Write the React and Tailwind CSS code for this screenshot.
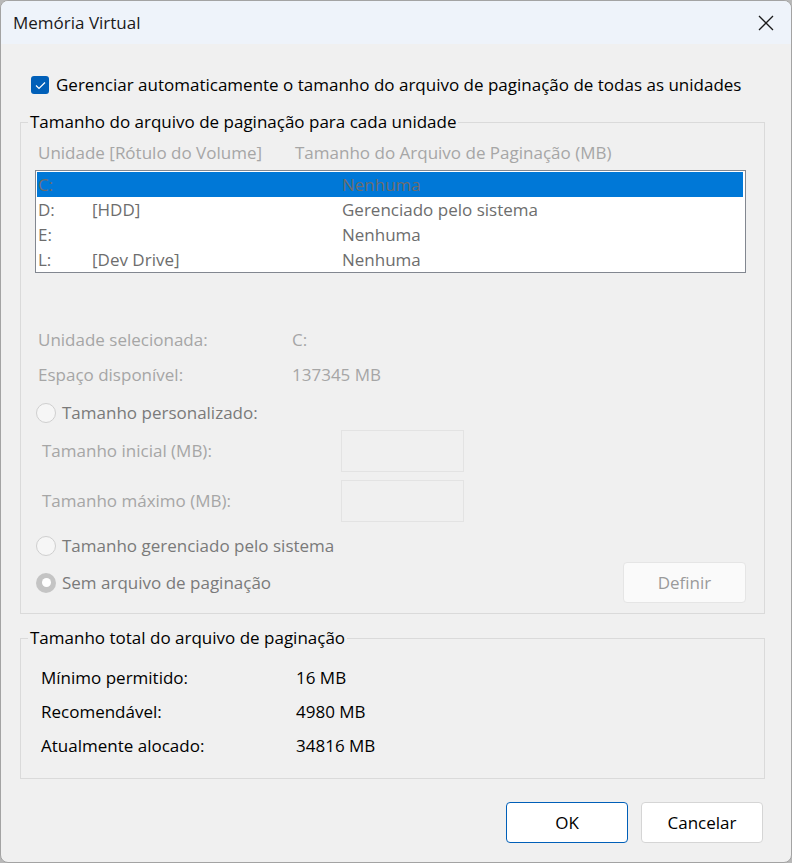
import React from 'react'

const font = { fontFamily: '"Open Sans", "Noto Sans", sans-serif' }

function Radio({ checked, label }) {
    return (
        <div className="flex items-center h-[24px]">
            {checked ? (
                <div className="w-[20px] h-[20px] rounded-full bg-[#c4c4c4] flex items-center justify-center">
                    <div className="w-[9px] h-[9px] rounded-full bg-white" />
                </div>
            ) : (
                <div className="w-[20px] h-[20px] rounded-full border border-[#cfcfcf] bg-[#f6f6f6]" />
            )}
            <span className="ml-[6px] text-[#7a7a7a]">{label}</span>
        </div>
    )
}

function Legend({ children }) {
    return (
        <legend className="ml-[7px] px-[2px] leading-[22px] text-black">{children}</legend>
    )
}

export default function App() {
    const drives = [
        { id: 'C:', label: '', size: 'Nenhuma', selected: true },
        { id: 'D:', label: '[HDD]', size: 'Gerenciado pelo sistema' },
        { id: 'E:', label: '', size: 'Nenhuma' },
        { id: 'L:', label: '[Dev Drive]', size: 'Nenhuma' },
    ]
    return (
        <div className="w-[792px] h-[863px] bg-[#b8b8b8]" style={font}>
            <div className="w-[792px] h-[863px] flex flex-col bg-[#f0f0f0] border border-[#a3a3a3] rounded-[8px] overflow-hidden text-[17px] text-black">
                {/* title bar */}
                <div className="h-[43px] shrink-0 bg-[#eef3fa] flex items-center justify-between pl-[12px] pr-[17px]">
                    <span className="text-[#1a1a1a]">Memória Virtual</span>
                    <svg width="16" height="16" viewBox="0 0 16 16" className="text-[#1a1a1a]">
                        <path d="M1 1 L15 15 M15 1 L1 15" stroke="currentColor" strokeWidth="1.3" fill="none" />
                    </svg>
                </div>

                <div className="flex flex-col pt-[29px]">
                    {/* auto checkbox */}
                    <div className="flex items-center h-[24px] pl-[30px]">
                        <div className="w-[18px] h-[18px] rounded-[3px] bg-[#005fb8] flex items-center justify-center">
                            <svg width="11" height="9" viewBox="0 0 11 9">
                                <path d="M1 4.5 L4 7.5 L10 1.5" stroke="white" strokeWidth="1.2" fill="none" />
                            </svg>
                        </div>
                        <span className="ml-[7px]">Gerenciar automaticamente o tamanho do arquivo de paginação de todas as unidades</span>
                    </div>

                    {/* per drive group */}
                    <fieldset className="mt-[14px] ml-[19px] w-[745px] border border-[#dadada] pb-[10px]">
                        <Legend>Tamanho do arquivo de paginação para cada unidade</Legend>
                        <div className="mt-[9px] h-[22px] flex items-center text-[#a6a6a6]">
                            <span className="pl-[17px] w-[274px]">Unidade [Rótulo do Volume]</span>
                            <span>Tamanho do Arquivo de Paginação (MB)</span>
                        </div>
                        <div className="mt-[6px] ml-[14px] w-[711px] border border-[#828790] bg-white pt-[1px] pl-[1px] pr-[2px]">
                            {drives.map((d) => (
                                <div key={d.id} className={`h-[25px] flex items-center text-[#6d6d6d] ${d.selected ? 'bg-[#0078d7]' : ''}`}>
                                    <span className="pl-[1px] w-[55px]">{d.id}</span>
                                    <span className="w-[250px]">{d.label}</span>
                                    <span>{d.size}</span>
                                </div>
                            ))}
                        </div>

                        <div className="mt-[55px] h-[24px] flex items-center text-[#a6a6a6]">
                            <span className="pl-[17px] w-[271px]">Unidade selecionada:</span>
                            <span>C:</span>
                        </div>
                        <div className="mt-[11px] h-[24px] flex items-center text-[#a6a6a6]">
                            <span className="pl-[17px] w-[271px]">Espaço disponível:</span>
                            <span>137345 MB</span>
                        </div>

                        <div className="mt-[14px] pl-[15px]">
                            <Radio label="Tamanho personalizado:" />
                        </div>
                        <div className="mt-[5px] flex items-center">
                            <span className="pl-[21px] w-[320px] text-[#a6a6a6]">Tamanho inicial (MB):</span>
                            <div className="w-[123px] h-[42px] border border-[#e3e3e3]" />
                        </div>
                        <div className="mt-[8px] flex items-center">
                            <span className="pl-[21px] w-[320px] text-[#a6a6a6]">Tamanho máximo (MB):</span>
                            <div className="w-[123px] h-[42px] border border-[#e3e3e3]" />
                        </div>
                        <div className="mt-[12px] pl-[15px]">
                            <Radio label="Tamanho gerenciado pelo sistema" />
                        </div>
                        <div className="mt-[4px] h-[41px] flex items-center justify-between pl-[15px] pr-[18px]">
                            <Radio checked label="Sem arquivo de paginação" />
                            <div className="w-[123px] h-[41px] rounded-[4px] border border-[#e5e5e5] bg-[#fafafa] flex items-center justify-center text-[#9a9a9a]">
                                Definir
                            </div>
                        </div>
                    </fieldset>

                    {/* totals group */}
                    <fieldset className="mt-[13px] ml-[19px] w-[745px] border border-[#dadada] pb-[20px]">
                        <Legend>Tamanho total do arquivo de paginação</Legend>
                        <div className="mt-[17px] flex flex-col gap-[10px]">
                            {[
                                ['Mínimo permitido:', '16 MB'],
                                ['Recomendável:', '4980 MB'],
                                ['Atualmente alocado:', '34816 MB'],
                            ].map(([k, v]) => (
                                <div key={k} className="h-[24px] flex items-center">
                                    <span className="pl-[20px] w-[275px]">{k}</span>
                                    <span>{v}</span>
                                </div>
                            ))}
                        </div>
                    </fieldset>

                    {/* buttons */}
                    <div className="mt-[23px] flex justify-end gap-[13px] pr-[28px]">
                        <button className="w-[122px] h-[41px] rounded-[4px] border border-[#005fb8] bg-white text-black">OK</button>
                        <button className="w-[122px] h-[41px] rounded-[4px] border border-[#d5d5d5] bg-white text-black">Cancelar</button>
                    </div>
                </div>
            </div>
        </div>
    )
}
